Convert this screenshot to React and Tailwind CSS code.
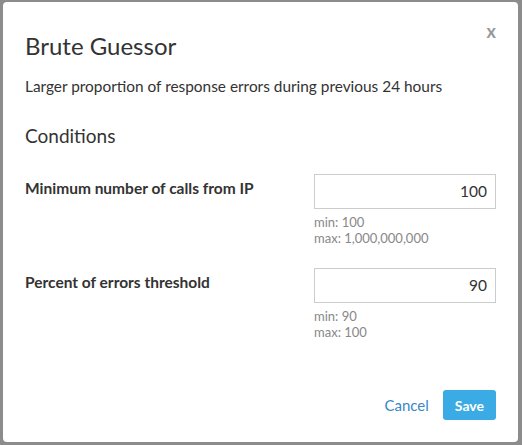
import React from 'react';

const Field = ({ label, value, min, max }) => (
  <div className="flex justify-between">
    <label className="pt-[3px] text-[15.5px] font-bold text-[#333]">{label}</label>
    <div className="w-[182px]">
      <input
        type="text"
        defaultValue={value}
        className="block h-[35px] w-full border border-[#ccc] px-[8px] text-right text-[15.5px] text-[#333] focus:outline-none"
      />
      <div className="mt-[5px] text-[13px] leading-[16px] text-[#888]">
        <p>min: {min}</p>
        <p>max: {max}</p>
      </div>
    </div>
  </div>
);

export default function App() {
  return (
    <div
      className="flex h-[445px] w-[522px] bg-[#8c8c8c] pt-[2px] pl-[3px] pr-[4px] pb-[3px]"
      style={{ fontFamily: 'Lato, "Open Sans", sans-serif' }}
    >
      <div className="relative flex flex-1 flex-col rounded-[4px] bg-white px-[22px]">
        <button className="absolute right-[22px] top-[16px] text-[18px] font-bold text-[#999]">x</button>

        {/* Header */}
        <h2 className="pt-[28px] text-[24px] leading-[32px] text-[#333]">Brute Guessor</h2>
        <p className="mt-[13px] text-[15.4px] text-[#333]">Larger proportion of response errors during previous 24 hours</p>

        {/* Conditions */}
        <h3 className="mt-[24px] text-[19px] text-[#333]">Conditions</h3>
        <div className="mt-[23px] flex flex-col gap-[22px]">
          <Field label="Minimum number of calls from IP" value="100" min="100" max="1,000,000,000" />
          <Field label="Percent of errors threshold" value="90" min="90" max="100" />
        </div>

        {/* Footer */}
        <div className="mt-auto mb-[22px] flex items-center justify-end gap-[14px]">
          <button className="text-[15px] text-[#3a87c8]">Cancel</button>
          <button className="h-[30px] rounded-[3px] bg-[#3aabe4] px-[12px] text-[14px] font-bold text-white">Save</button>
        </div>
      </div>
    </div>
  );
}
